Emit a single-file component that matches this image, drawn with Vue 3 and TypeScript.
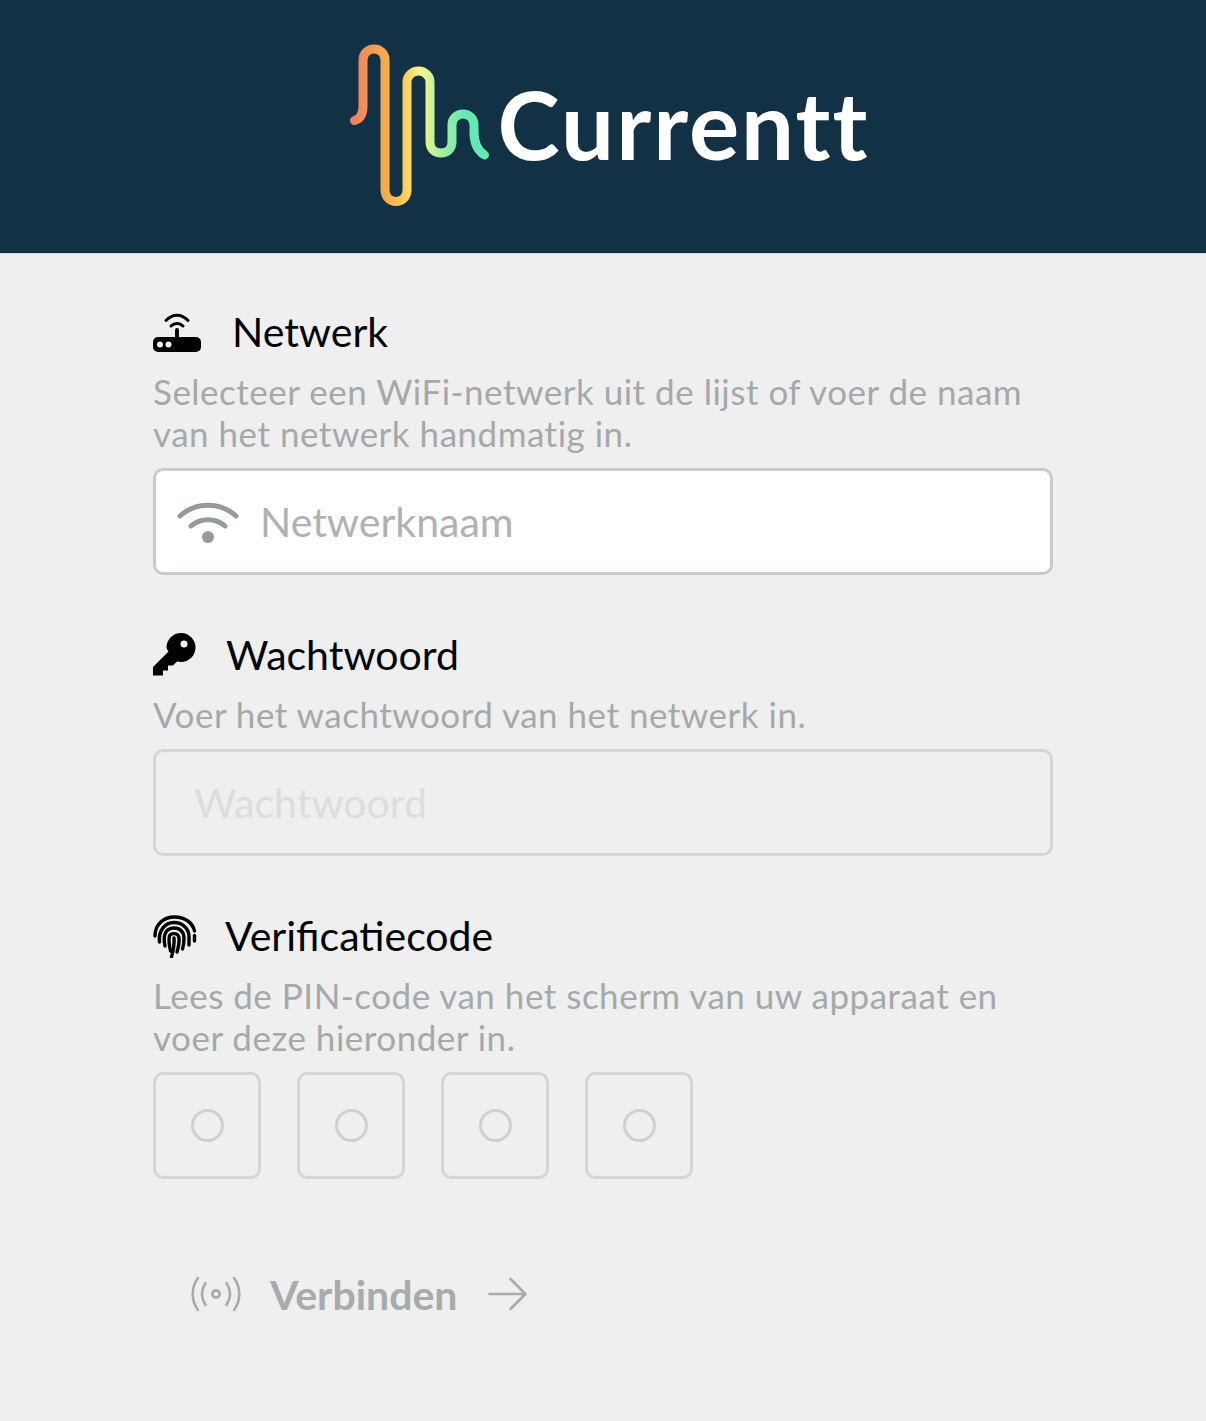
<script setup lang="ts">
const pins: number[] = [0, 1, 2, 3]
</script>

<template>
  <div class="page">
    <header class="top">
      <div class="logo">
        <svg class="wave" width="150" height="170" viewBox="335 40 150 170" fill="none">
          <defs>
            <linearGradient id="wg" gradientUnits="userSpaceOnUse" x1="345" y1="0" x2="478" y2="0">
              <stop offset="0" stop-color="#ee8060" />
              <stop offset="0.25" stop-color="#f6ad4c" />
              <stop offset="0.42" stop-color="#fbd562" />
              <stop offset="0.5" stop-color="#fdf58c" />
              <stop offset="0.68" stop-color="#9ef0a0" />
              <stop offset="0.85" stop-color="#66e8b4" />
              <stop offset="1" stop-color="#66e8b4" />
            </linearGradient>
          </defs>
          <path
            d="M346.5 120.5C352 119 355 114 355 106V60C355 53.5 360 49 366 49S377 53.5 377 60V190C377 197 382 201.5 388 201.5S399 197 399 190V82C399 75.500 404.500 71 410.500 71S422 75.500 422 82V142C422 149 427 153 433 153S444 149 444 142V125C444 118.500 449 114 455 114S466 118.500 466 125V132C466 143 470 151 476.500 155"
            stroke="url(#wg)"
            stroke-width="9"
            stroke-linecap="round"
            stroke-linejoin="round"
          />
        </svg>
        <span class="brand">Currentt</span>
      </div>
    </header>

    <main class="form">
      <section class="field">
        <h2 class="label">
          <svg class="ic router" width="48" height="44" viewBox="0 0 48 44">
            <path d="M13 10.500C19.500 3.500 28.500 3.500 35 10.500" fill="none" stroke="#000" stroke-width="3" stroke-linecap="round" />
            <path d="M18 16C21.500 12.500 26.500 12.500 30 16" fill="none" stroke="#000" stroke-width="3" stroke-linecap="round" />
            <path d="M24 20V29" stroke="#000" stroke-width="4" stroke-linecap="round" />
            <path fill-rule="evenodd" d="M5 27H43A5 5 0 0 1 48 32V37A5 5 0 0 1 43 42H5A5 5 0 0 1 0 37V32A5 5 0 0 1 5 27ZM7 31.500A3 3 0 1 0 7 37.500A3 3 0 1 0 7 31.500ZM15.500 31.500A3 3 0 1 0 15.500 37.500A3 3 0 1 0 15.500 31.500Z" />
          </svg>
          <span class="t-net">Netwerk</span>
        </h2>
        <p class="desc">Selecteer een WiFi-netwerk uit de lijst of voer de naam van het netwerk handmatig in.</p>
        <div class="input active">
          <svg width="62" height="44" viewBox="0 0 62 44" fill="none">
            <path d="M3 16C19 1.500 43 1.500 59 16" stroke="#959a9a" stroke-width="5" stroke-linecap="round" />
            <path d="M14 26C23 17.500 39 17.500 48 26" stroke="#959a9a" stroke-width="5" stroke-linecap="round" />
            <circle cx="31" cy="37" r="6" fill="#959a9a" />
          </svg>
          <span class="ph">Netwerknaam</span>
        </div>
      </section>

      <section class="field f2">
        <h2 class="label">
          <svg class="ic key" width="44" height="44" viewBox="0 0 44 44">
            <path fill-rule="evenodd" d="M28 0A14.500 14.500 0 1 1 28 29C26.500 29 25 28.800 24 28.500L20 32.500H15V37.500H10V42.500H0V34L15.500 18.500C14.500 17 13.500 15.500 13.500 14.500A14.500 14.500 0 0 1 28 0ZM31 7.500A3.500 3.500 0 1 0 31 14.500A3.500 3.500 0 1 0 31 7.500Z" />
          </svg>
          <span class="t-pw">Wachtwoord</span>
        </h2>
        <p class="desc">Voer het wachtwoord van het netwerk in.</p>
        <div class="input disabled">
          <span class="ph dim">Wachtwoord</span>
        </div>
      </section>

      <section class="field f3">
        <h2 class="label">
          <svg class="ic finger" width="44" height="44" viewBox="0 0 44 44" fill="none" stroke="#000" stroke-width="3.400" stroke-linecap="round">
            <path d="M2 22C2 10 11 3 21.500 3S40 9 41.500 17" />
            <path d="M41.500 21.500V27" />
            <path d="M6.500 28C5 17 12 8.500 21 8.500C29 8.500 35.500 14 36 22V31" />
            <path d="M12 32C10 23 11.500 14 21 14C27 14 31 18 31 24C31 28 30.500 32 29.500 35" />
            <path d="M17.500 37C16 30 15.500 25 16.500 22C17.500 19 25.500 18 26 24C26.500 29 25.500 33 24 38" />
            <path d="M21 24C21.500 31 20.500 37 18.500 43" />
          </svg>
          <span class="t-pin">Verificatiecode</span>
        </h2>
        <p class="desc">Lees de PIN-code van het scherm van uw apparaat en voer deze hieronder in.</p>
        <div class="pins">
          <div v-for="p in pins" :key="p" class="pin"><i class="dot"></i></div>
        </div>
      </section>

      <div class="connect">
        <svg width="50" height="36" viewBox="0 0 50 36" fill="none" stroke="#a7abab" stroke-width="2.600" stroke-linecap="round">
          <path d="M7 2C0 11 0 25 7 34" />
          <path d="M14.500 7C10 14 10 22 14.500 29" />
          <circle cx="25" cy="18" r="3.600" />
          <path d="M35.500 7C40 14 40 22 35.500 29" />
          <path d="M43 2C50 11 50 25 43 34" />
        </svg>
        <span class="go">Verbinden</span>
        <svg width="40" height="34" viewBox="0 0 40 34" fill="none" stroke="#a7abab" stroke-width="2.600" stroke-linecap="round" stroke-linejoin="round">
          <path d="M1.500 17H37.500M22.500 2L37.500 17L22.500 32" />
        </svg>
      </div>
    </main>
  </div>
</template>

<style>
html, body { margin: 0; background: #efefef; }
</style>

<style scoped>
.page {
  width: 1206px;
  height: 1421px;
  overflow: hidden;
  background: #efefef;
  font-family: Lato, "Open Sans", sans-serif;
}
.top {
  height: 254px;
  background: #133144;
  border-bottom: 1px solid #d5dadd;
  box-sizing: border-box;
  display: flex;
  justify-content: center;
  padding-top: 40px;
}
.logo {
  display: flex;
  align-items: flex-start;
  margin-left: 6px;
}
.wave { display: block; margin-left: 0; }
.brand {
  margin-left: 5px;
  margin-top: 28px;
  font-size: 94px;
  line-height: 112px;
  font-weight: 700;
  color: #fff;
  letter-spacing: 2px;
}
.form {
  padding: 0 153px;
  display: flex;
  flex-direction: column;
}
.field { padding-top: 54px; }
.f2 { padding-top: 56px; }
.f3 { padding-top: 56px; }
.label {
  margin: 0;
  height: 48px;
  display: flex;
  align-items: center;
  font-size: 41px;
  font-weight: 400;
  line-height: 48px;
  color: #000;
}
.ic { display: block; flex: none; }
.t-net { margin-left: 31px; }
.t-pw { margin-left: 29px; }
.t-pin { margin-left: 28px; }
.desc {
  margin: 14px 0 0;
  font-size: 35px;
  line-height: 42px;
  color: #a5a9a9;
  letter-spacing: 0.5px;
}
.input {
  margin-top: 14px;
  height: 107px;
  box-sizing: border-box;
  border: 3px solid #c8cbcb;
  border-radius: 10px;
  display: flex;
  align-items: center;
  padding-left: 21px;
  gap: 21px;
}
.active { background: #fff; }
.disabled { border-color: #d3d6d6; padding-left: 38px; }
.ph {
  font-size: 41px;
  color: #aeb2b2;
}
.dim { color: #dcdede; }
.pins {
  margin-top: 14px;
  display: flex;
  gap: 36px;
}
.pin {
  width: 108px;
  height: 107px;
  box-sizing: border-box;
  border: 3px solid #d3d6d6;
  border-radius: 10px;
  display: flex;
  align-items: center;
  justify-content: center;
}
.dot {
  display: block;
  width: 33px;
  height: 33px;
  box-sizing: border-box;
  border: 3px solid #cfd1d1;
  border-radius: 50%;
}
.connect {
  margin-top: 90px;
  margin-left: 38px;
  display: flex;
  align-items: center;
  height: 50px;
}
.go {
  margin-left: 29px;
  margin-right: 30px;
  font-size: 41px;
  font-weight: 700;
  color: #a7abab;
}
</style>
